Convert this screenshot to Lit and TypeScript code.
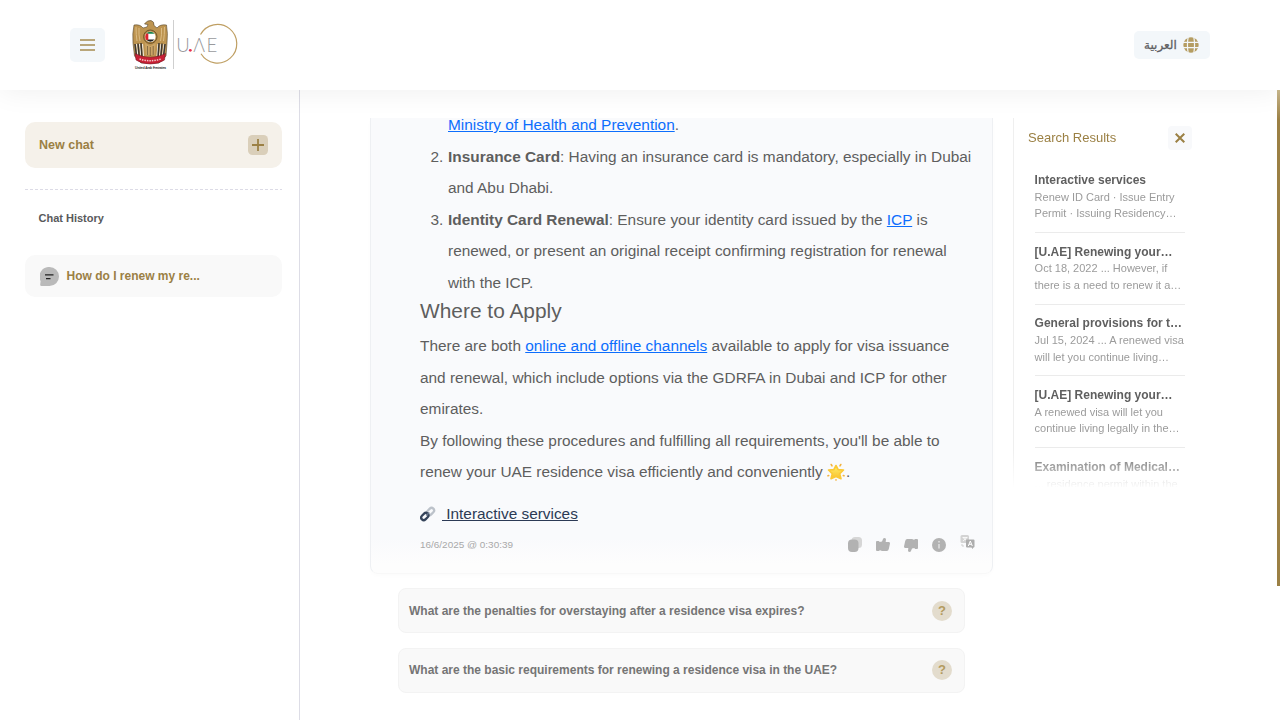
import { LitElement, html, css, svg } from "lit";
import { customElement } from "lit/decorators.js";

const results = [
  { title: "Interactive services", lines: ["Renew ID Card · Issue Entry", "Permit · Issuing Residency…"] },
  { title: "[U.AE] Renewing your…", lines: ["Oct 18, 2022 ... However, if", "there is a need to renew it a…"] },
  { title: "General provisions for t…", lines: ["Jul 15, 2024 ... A renewed visa", "will let you continue living…"] },
  { title: "[U.AE] Renewing your…", lines: ["A renewed visa will let you", "continue living legally in the…"] },
  { title: "Examination of Medical…", lines: ["... residence permit within the"] },
];

const questions = [
  "What are the penalties for overstaying after a residence visa expires?",
  "What are the basic requirements for renewing a residence visa in the UAE?",
];

const feathers = [0, 1, 2].map(
  (i) => svg`
    <path d="M${4 + i * 3} ${25 - i * 0.5}L${5.5 + i * 2.8} ${37 + i * 1.5}" stroke="#3d3831" stroke-width="1.5"/>
    <path d="M${34 - i * 3} ${25 - i * 0.5}L${32.5 - i * 2.8} ${37 + i * 1.5}" stroke="#3d3831" stroke-width="1.5"/>`
);

@customElement("app-root")
export class AppRoot extends LitElement {
  static styles = css`
    :host {
      display: flex;
      flex-direction: column;
      width: 1280px;
      height: 720px;
      overflow: hidden;
      position: relative;
      background: #fff;
      font-family: "Liberation Sans", Arial, sans-serif;
      color: #5e5e5e;
    }
    * { box-sizing: border-box; }
    svg { display: block; flex: none; }
    a { color: #0d6efd; text-decoration: underline; }
    header {
      height: 90px;
      flex: none;
      display: flex;
      align-items: center;
      padding: 0 70px;
      background: #fff;
      box-shadow: 0 0 30px rgba(0, 0, 0, 0.07);
      z-index: 1;
    }
    .burger {
      width: 35px;
      height: 34px;
      border-radius: 5px;
      background: #f3f7fa;
      display: grid;
      place-items: center;
    }
    .logo { margin-left: 26px; }
    .lang {
      margin-left: auto;
      width: 76px;
      height: 28px;
      border-radius: 5px;
      background: #f3f7fa;
      display: flex;
      align-items: center;
      justify-content: space-between;
      padding: 0 11px 0 10px;
      font: 12px "DejaVu Sans", sans-serif;
      color: #5f6062;
      -webkit-text-stroke: 0.3px #5f6062;
    }
    .body { flex: 1; display: flex; min-height: 0; }
    .side {
      width: 300px;
      flex: none;
      border-right: 1px solid #dddde6;
      padding: 32px 17px 0 25px;
    }
    .new {
      height: 46px;
      border-radius: 10px;
      background: #f5f1ea;
      display: flex;
      align-items: center;
      justify-content: space-between;
      padding: 0 14px;
      font-weight: bold;
      font-size: 12.5px;
      color: #9b8044;
    }
    .dash {
      margin-top: 21px;
      height: 1px;
      background: repeating-linear-gradient(90deg, #dcdbe6 0 3px, transparent 3px 5px);
    }
    .label {
      margin: 20px 0 0 13.5px;
      font-weight: bold;
      font-size: 11px;
      line-height: 16px;
      color: #58595b;
    }
    .item {
      margin-top: 29px;
      height: 42px;
      border-radius: 10px;
      background: #f9f9f9;
      display: flex;
      align-items: center;
      gap: 7.5px;
      padding-left: 15px;
      font-weight: bold;
      font-size: 12px;
      color: #9b8044;
    }
    .main { width: 623px; margin: 28px 0 0 70px; flex: none; }
    .card {
      height: 456px;
      overflow: hidden;
      border: 1px solid #eef0f3;
      border-top: 0;
      border-bottom-color: #f8f8f8;
      border-radius: 0 0 8px 8px;
      background: linear-gradient(#f9fafc 0 420px, #fdfdfd 446px);
      padding-left: 49px;
      box-shadow: 0 2px 4px rgba(0, 0, 0, 0.015);
    }
    .text { font-size: 15.4px; line-height: 31.55px; white-space: nowrap; margin-top: -9px; }
    .text p, .text h2 { margin: 0; }
    .row { display: flex; }
    .num { width: 28px; padding-left: 10.5px; flex: none; }
    .text h2 { font-size: 20.9px; font-weight: normal; line-height: 25px; margin-bottom: 6.9px; }
    .star { display: inline-block; vertical-align: -4px; margin: 0 1px 0 0; }
    .source {
      display: flex;
      align-items: center;
      margin-top: 14.6px;
      height: 22px;
      font-size: 15.38px;
    }
    .source a { color: #2c3a55; margin-left: 6px; white-space: pre; }
    .meta {
      display: flex;
      align-items: center;
      height: 22px;
      margin-top: 8.5px;
      padding-right: 15px;
      font-size: 9.95px;
      color: #a9a9a9;
    }
    .acts { margin-left: auto; display: flex; gap: 12px; align-items: flex-end; }
    .qs { margin: 14px 28px 0; display: flex; flex-direction: column; gap: 15px; }
    .q {
      height: 45px;
      border: 1px solid #f3f3f3;
      border-radius: 8px;
      background: #f9f9f9;
      display: flex;
      align-items: center;
      justify-content: space-between;
      padding: 0 12px 0 10px;
      font-size: 12px;
      font-weight: bold;
      color: #757575;
      white-space: nowrap;
    }
    .q:last-child { padding-bottom: 2px; }
    .mark {
      width: 20px;
      height: 20px;
      border-radius: 50%;
      background: #e3dccd;
      color: #b39b5e;
      font-size: 13px;
      display: grid;
      place-items: center;
    }
    .found {
      width: 180px;
      height: 369px;
      margin: 28px 0 0 20px;
      border-left: 1px solid #efefef;
      overflow: hidden;
      -webkit-mask-image: linear-gradient(#000 332px, transparent 371px);
      mask-image: linear-gradient(#000 332px, transparent 371px);
    }
    .fh {
      display: flex;
      align-items: center;
      justify-content: space-between;
      height: 24px;
      margin: 8px 1px 11px 14px;
      font-size: 13px;
      color: #9b8044;
    }
    .fh .name { padding-bottom: 2px; }
    .x {
      width: 24px;
      height: 24px;
      border-radius: 4px;
      background: #f8f9fb;
      display: grid;
      place-items: center;
    }
    .r {
      width: 150px;
      margin-left: 20.6px;
      padding: 10.9px 0 10.3px;
      border-bottom: 1px solid #ebebeb;
      font-size: 11px;
      line-height: 16.4px;
      color: #9b9b9b;
      white-space: nowrap;
    }
    .r b { display: block; font-size: 12px; line-height: 16.8px; color: #5f5f5f; }
    .bar {
      position: absolute;
      right: 0;
      top: 90px;
      width: 3px;
      height: 496px;
      background: linear-gradient(#c8b78c, #9b8044 30px);
    }
  `;

  render() {
    return html`
      <header>
        <div class="burger">
          <svg width="15" height="12" viewBox="0 0 15 12" fill="none" stroke="#a68c50" stroke-width="1.3">
            <path d="M0 1h15M0 6h15M0 11h15" />
          </svg>
        </div>
        <svg class="logo" width="108" height="52" viewBox="0 0 108 52" fill="none">
          <path d="M3 6Q9 5 12 9L16 8 17 5.500 13.500 5Q16 1 20 1.500Q23.500 2.500 23 6.500L26 9Q29 5 35.500 6Q37 14 36 24L35 37 28 44H10L3.500 37 2 24Q1.200 14 3 6z" fill="#bd9450" stroke="#54452d" stroke-width=".6" />
          <path d="M5 8q0 8 1 14M8 9q-.500 7 1 13M33.500 8q0 8-1 14M30.500 9q.500 7-1 13" stroke="#dcbc84" stroke-width="1" />
          <path d="M5.500 25L7 38M33 25L31.500 38M8.500 25l1.500 12M30 25l-1.500 12M11.500 25l1 12M27 25l-1 12" stroke="#f0ebe2" stroke-width="1.100" />
          ${feathers}
          <path d="M14 24l5.300 3 5.300-3-1 12h-8.600z" fill="#cba567" />
          <path d="M16.500 27v9M19.300 28v9M22.200 27v9" stroke="#6a5534" stroke-width=".7" />
          <circle cx="19.300" cy="17.700" r="6.700" fill="#b58a45" stroke="#5a4525" stroke-width=".8" />
          <circle cx="19.300" cy="17.700" r="5.300" fill="#fff" />
          <path d="M15.100 14.800a5.200 5.200 0 0 1 8.400 0z" fill="#16834e" />
          <path d="M15.100 20.600a5.200 5.200 0 0 0 8.400 0z" fill="#222" />
          <path d="M15.300 14.400h2v6.600h-2Q13.100 17.700 15.300 14.400z" fill="#dc2430" />
          <path d="M4 34.500Q19.300 42 34.500 34.500L33.500 41Q28 45 19.300 45T5 41z" fill="#c82035" stroke="#6b1722" stroke-width=".5" />
          <path d="M8.500 40q10.800 3.500 21.600 0" stroke="#f5c8c8" stroke-width="1.500" stroke-dasharray="1.500 1" />
          <text x="4" y="50" font-family="Liberation Sans" font-size="3.300" fill="#333" stroke="#333" stroke-width=".12" textLength="31">United Arab Emirates</text>
          <path d="M42.500 1v49" stroke="#cfcfcf" />
          <g font-family="Lato" font-weight="300" font-size="18.600" fill="#999a9d">
            <text x="45.200" y="32.700">U</text>
            <text x="62.200" y="32.700" textLength="11.800" lengthAdjust="spacingAndGlyphs">Λ</text>
            <text x="75.500" y="32.700">E</text>
          </g>
          <circle cx="59.300" cy="31.300" r="1.400" fill="#e83050" />
          <path d="M69.500 15.500A19.300 19.300 0 1 1 70 34.800" stroke="#bf9f63" stroke-width="1.200" />
        </svg>
        <div class="lang">
          <span lang="ar" dir="rtl">العربية</span>
          <svg width="16" height="16" viewBox="0 0 16 16">
            <circle cx="8" cy="8" r="7.700" fill="#b59d62" />
            <path d="M0 5.300h16M0 10.700h16M5.200 0q-1.500 8 0 16M10.800 0q1.500 8 0 16" stroke="#f3f7fa" stroke-width="1.200" fill="none" />
          </svg>
        </div>
      </header>
      <div class="body">
        <aside class="side">
          <div class="new">
            New chat
            <svg width="20" height="20" viewBox="0 0 20 20">
              <rect width="20" height="20" rx="4.500" fill="#dacfba" />
              <path d="M10 4v12M4 10h12" stroke="#9b8044" stroke-width="1.800" />
            </svg>
          </div>
          <div class="dash"></div>
          <div class="label">Chat History</div>
          <div class="item">
            <svg width="19" height="19" viewBox="0 0 19 19">
              <path d="M9.500 0a9.500 9.500 0 1 1 0 19H1.500Q0 19 .200 17.500L.600 14A9.500 9.500 0 0 1 9.500 0z" fill="#bababa" />
              <path d="M5 7.800h8.500M6 11.700h4.500" stroke="#222" stroke-width="1.300" />
            </svg>
            How do I renew my re...
          </div>
        </aside>
        <main class="main">
          <section class="card">
            <div class="text">
              <div class="row"><span class="num"></span><span><a>Ministry of Health and Prevention</a>.</span></div>
              <div class="row">
                <span class="num">2.</span>
                <span><b>Insurance Card</b>: Having an insurance card is mandatory, especially in Dubai<br />and Abu Dhabi.</span>
              </div>
              <div class="row">
                <span class="num">3.</span>
                <span><b>Identity Card Renewal</b>: Ensure your identity card issued by the <a>ICP</a> is<br />renewed, or present an original receipt confirming registration for renewal<br />with the ICP.</span>
              </div>
              <h2>Where to Apply</h2>
              <p>There are both <a>online and offline channels</a> available to apply for visa issuance<br />and renewal, which include options via the GDRFA in Dubai and ICP for other<br />emirates.</p>
              <p>By following these procedures and fulfilling all requirements, you'll be able to<br />renew your UAE residence visa efficiently and conveniently <svg class="star" width="18" height="18" viewBox="0 0 18 18">
                <defs><linearGradient id="sg" x1="0" y1="0" x2="0" y2="1"><stop offset="0" stop-color="#fff16b" /><stop offset="1" stop-color="#f9c02c" /></linearGradient></defs>
                <path d="M9 2.500l2.200 4.100 5.300.4-3.800 3.700 1.300 5L9 13.400l-5 2.300 1.300-5L1.500 7l5.300-.4z" fill="url(#sg)" stroke="#fbc936" stroke-width="1.600" stroke-linejoin="round" />
                <path d="M4.200 1.500l.8 1.400M13.800 1.500l-.8 1.400M1 12.800l.7-.3M17 12.800l-.7-.3M9 16.700v.4" stroke="#f3b440" stroke-width="1.600" stroke-linecap="round" />
              </svg>.</p>
            </div>
            <div class="source">
              <svg width="16" height="16" viewBox="0 0 16 16" fill="none" stroke-width="2.300">
                <rect x="6.500" y="3" width="8" height="5" rx="2.500" transform="rotate(-45 10.500 5.500)" stroke="#bcc2ca" />
                <rect x=".800" y="8" width="8" height="5" rx="2.500" transform="rotate(-45 4.800 10.500)" stroke="#35435a" />
                <path d="M6.300 9.500l3-3" stroke="#66748a" stroke-width="1.600" />
              </svg>
              <a> Interactive services</a>
            </div>
            <div class="meta">
              <span>16/6/2025 @ 0:30:39</span>
              <div class="acts">
                <svg width="16" height="16" viewBox="0 0 16 16">
                  <rect x="4.500" y="0" width="10.500" height="11" rx="3.500" fill="#d6d6d6" />
                  <rect x="1" y="2.500" width="10.500" height="12.500" rx="4" fill="#b2b2b2" />
                </svg>
                <svg width="16" height="16" viewBox="0 0 16 16" fill="#b2b2b2">
                  <path d="M1 5q0-1 1-1h1.500q1 0 1 1L7 4.500 8.200 1.500Q10 .300 11 2L10.700 5H14q1 .3 1 1.500L13.800 12q-.5 1.800-2 2H7l-2.500-1v1H2q-1 0-1-1z" />
                </svg>
                <svg width="16" height="16" viewBox="0 0 16 16" fill="#b2b2b2">
                  <path d="M15 11q0 1-1 1h-1.500q-1 0-1-1L9 11.500 7.800 14.500Q6 15.700 5 14L5.300 11H2q-1-.3-1-1.500L2.200 4q.5-1.800 2-2H9l2.500 1V2H14q1 0 1 1z" />
                </svg>
                <svg width="16" height="16" viewBox="0 0 16 16">
                  <circle cx="8" cy="8" r="7" fill="#b2b2b2" />
                  <path d="M8 7v4.500M8 4v1.500" stroke="#ededed" stroke-width="1.200" />
                </svg>
                <svg width="18" height="18" viewBox="0 0 18 18">
                  <rect x="1.500" y="0" width="8.500" height="8" rx="1.500" fill="#d3d3d3" />
                  <path d="M3.500 2.500h5M4 6l4-3.500M4 2.500L8 6" stroke="#fff" stroke-width=".8" fill="none" />
                  <path d="M8 4.500h6.500q1 0 1 1v6q0 1-1 1l-1 1.500-1-1.500H8q-1 0-1-1v-6q0-1 1-1z" fill="#adadad" />
                  <path d="M9.300 11l2-5 2 5M10 9.300h2.600" stroke="#fff" fill="none" />
                  <path d="M3 9v2h2" stroke="#cfcfcf" fill="none" />
                </svg>
              </div>
            </div>
          </section>
          <div class="qs">
            ${questions.map((q) => html`<div class="q"><span>${q}</span><span class="mark">?</span></div>`)}
          </div>
        </main>
        <aside class="found">
          <div class="fh">
            <span class="name">Search Results</span>
            <span class="x">
              <svg width="10" height="10" viewBox="0 0 10 10" stroke="#9b8044" stroke-width="2"><path d="M.7.7l8.600 8.600M9.300.7L.7 9.300" /></svg>
            </span>
          </div>
          ${results.map((r) => html`<div class="r"><b>${r.title}</b>${r.lines.map((l, i) => html`${i ? html`<br />` : ""}${l}`)}</div>`)}
        </aside>
      </div>
      <div class="bar"></div>
    `;
  }
}
